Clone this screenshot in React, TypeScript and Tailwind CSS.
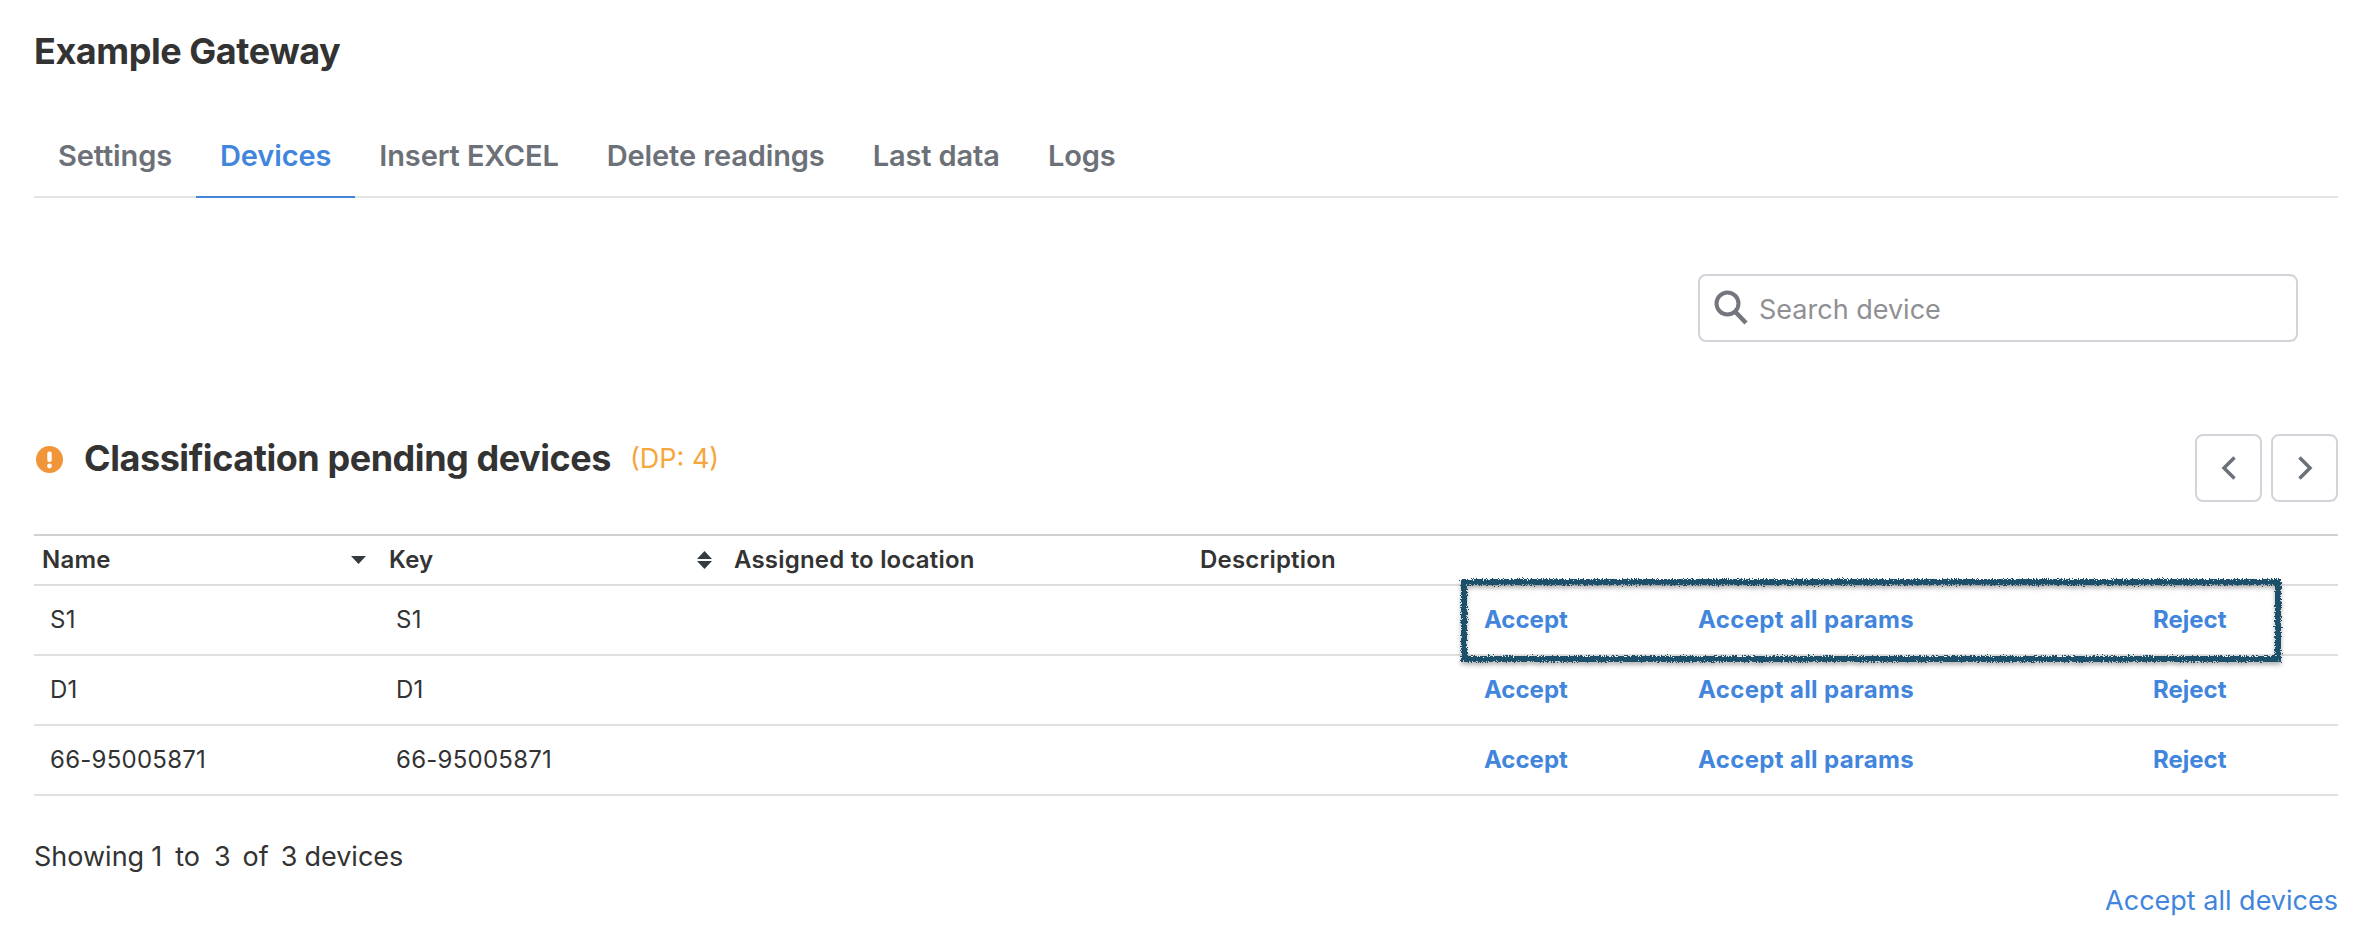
import React from "react";

const tabs = ["Settings", "Devices", "Insert EXCEL", "Delete readings", "Last data", "Logs"];
const rows = ["S1", "D1", "66-95005871"];

function Caret({ up = false }: { up?: boolean }) {
  return (
    <svg width="15" height="8" viewBox="0 0 15 8" className="block">
      <path d={up ? "M7.5 0L15 8H0Z" : "M0 0H15L7.5 8Z"} fill="currentColor" />
    </svg>
  );
}

export default function App() {
  return (
    <div className="min-h-[944px] bg-white pl-[34px] pr-[26px] font-['Inter',sans-serif] text-[#333333] overflow-hidden">
      <svg width="0" height="0" className="absolute">
        <filter id="rough" x="-5%" y="-20%" width="110%" height="140%">
          <feTurbulence type="fractalNoise" baseFrequency="0.8" numOctaves="2" seed="4" result="n" />
          <feDisplacementMap in="SourceGraphic" in2="n" scale="6" />
        </filter>
      </svg>

      <h1 className="h-[102px] flex items-center text-[36px] font-bold tracking-[-0.45px] text-[#333333]">Example Gateway</h1>

      <nav className="mt-[12px] flex h-[84px] border-b-2 border-[#e3e4e6]">
        {tabs.map((t) => (
          <a
            key={t}
            className={
              "-mb-[2px] flex items-center px-6 pt-[2px] text-[29px] font-semibold tracking-[-0.12px] " +
              (t === "Devices" ? "border-b-2 border-[#4285dc] text-[#4285dc]" : "border-b-2 border-transparent text-[#6c7178]")
            }
          >
            {t}
          </a>
        ))}
      </nav>

      <div className="mt-[76px] flex justify-end pr-10">
        <div className="flex h-[68px] w-[600px] items-center gap-[10px] rounded-lg border-2 border-[#d3d4d9] pl-[13px]">
          <svg width="36" height="36" viewBox="0 0 36 36" fill="none" stroke="#73767c" strokeWidth="4" className="-mt-[3px]">
            <circle cx="14.5" cy="14.5" r="11" />
            <path d="M22.5 23L33 34" strokeWidth="4.5" />
          </svg>
          <span className="pt-[5px] text-[27px] text-[#8f9093]">Search device</span>
        </div>
      </div>

      <div className="mt-[92px] flex h-[68px] items-center">
        <div className="mb-[20px] flex items-center">
          <svg width="27" height="27" viewBox="0 0 27 27" className="ml-[2px] mt-[2px]">
            <circle cx="13.5" cy="13.5" r="13.5" fill="#f19539" />
            <rect x="11.3" y="5.5" width="4.4" height="10.5" rx="2" fill="#fff" />
            <circle cx="13.5" cy="20" r="2.4" fill="#fff" />
          </svg>
          <h2 className="ml-[21px] text-[36px] font-bold tracking-[-0.45px] text-[#333333]">Classification pending devices</h2>
          <span className="ml-[19px] mt-[2px] text-[27px] text-[#f5a63c]">(DP: 4)</span>
        </div>
        <div className="ml-auto flex gap-[9px]">
          <button className="flex h-[68px] w-[67px] items-center justify-center rounded-lg border-2 border-[#d3d4d9]">
            <svg width="16" height="24" viewBox="0 0 16 24" fill="none" stroke="#6c7178" strokeWidth="3.5">
              <path d="M13.5 1.5L3 12L13.5 22.5" />
            </svg>
          </button>
          <button className="flex h-[68px] w-[67px] items-center justify-center rounded-lg border-2 border-[#d3d4d9]">
            <svg width="16" height="24" viewBox="0 0 16 24" fill="none" stroke="#6c7178" strokeWidth="3.5">
              <path d="M2.5 1.5L13 12L2.5 22.5" />
            </svg>
          </button>
        </div>
      </div>

      <div className="relative mt-[32px]">
        <table className="w-full table-fixed border-collapse text-[24px] tracking-[0.25px]">
          <thead>
            <tr className="h-[50px] border-y-2 border-t-[#d0d1d5] border-b-[#dcdde0] text-left">
              <th className="w-[347px] pl-2 font-semibold tracking-[0.2px]">
                <div className="flex items-center justify-between pr-[15px]">
                  Name
                  <span className="text-[#333a40]"><Caret /></span>
                </div>
              </th>
              <th className="w-[346px] pl-2 font-semibold tracking-[0.2px]">
                <div className="flex items-center justify-between pr-[15px]">
                  Key
                  <span className="flex flex-col gap-[2px] text-[#333a40]"><Caret up /><Caret /></span>
                </div>
              </th>
              <th className="w-[465px] pl-[7px] font-semibold tracking-[0.2px]">Assigned to location</th>
              <th className="w-[277px] pl-2 font-semibold tracking-[0.2px]">Description</th>
              <th className="w-[213px]"></th>
              <th className="w-[455px]"></th>
              <th></th>
            </tr>
          </thead>
          <tbody>
            {rows.map((r) => (
              <tr key={r} className="h-[70px] border-b-2 border-[#e0e0e0]">
                <td className="pl-[16px]">{r}</td>
                <td className="pl-[15px]">{r}</td>
                <td></td>
                <td></td>
                <td className="pl-[15px] font-bold tracking-normal text-[#4285dc]">Accept</td>
                <td className="pl-4 font-bold tracking-[0.35px] text-[#4285dc]">Accept all params</td>
                <td className="pl-4 font-bold tracking-normal text-[#4285dc]">Reject</td>
              </tr>
            ))}
          </tbody>
        </table>
        <div className="pointer-events-none absolute left-[1427px] top-[45px] h-[83px] w-[820px] border-[6px] border-[#1d5069] [filter:url(#rough)_drop-shadow(0_3px_2px_rgba(0,0,0,0.3))]"></div>
      </div>

      <div className="mt-[44px] flex text-[27px] leading-[34px]">
        <span>Showing</span>
        <span className="ml-[7px]">1</span>
        <span className="ml-[13px]">to</span>
        <span className="ml-[14px]">3</span>
        <span className="ml-[12px]">of</span>
        <span className="ml-[12px]">3</span>
        <span className="ml-[7px]">devices</span>
      </div>
      <div className="mt-[10px] text-right text-[27px] leading-[34px] text-[#4285dc]">Accept all devices</div>
    </div>
  );
}
